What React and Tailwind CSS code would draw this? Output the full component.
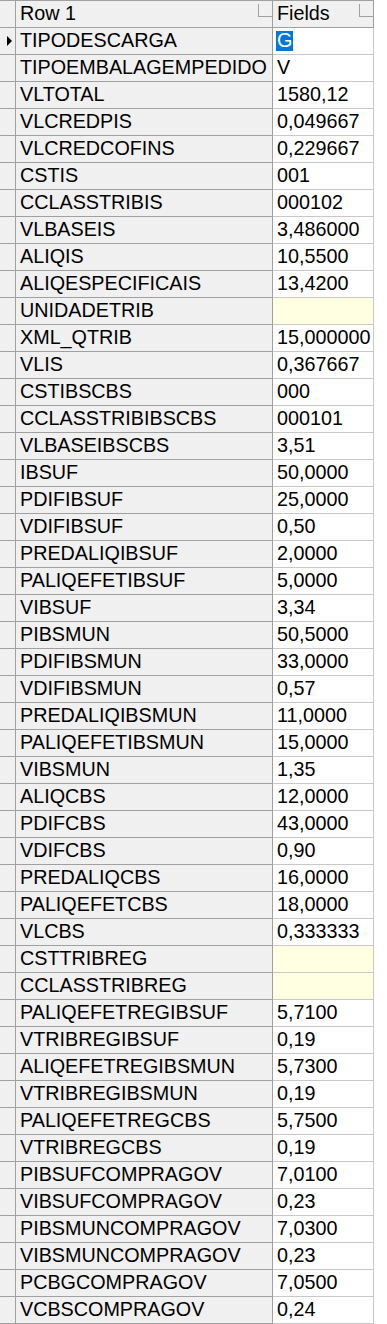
import React from 'react';

// ── Données de la grille ─────────────────────────────────────────────────────
const ROWS = [
  ["TIPODESCARGA", "G"],
  ["TIPOEMBALAGEMPEDIDO", "V"],
  ["VLTOTAL", "1580,12"],
  ["VLCREDPIS", "0,049667"],
  ["VLCREDCOFINS", "0,229667"],
  ["CSTIS", "001"],
  ["CCLASSTRIBIS", "000102"],
  ["VLBASEIS", "3,486000"],
  ["ALIQIS", "10,5500"],
  ["ALIQESPECIFICAIS", "13,4200"],
  ["UNIDADETRIB", null],
  ["XML_QTRIB", "15,000000"],
  ["VLIS", "0,367667"],
  ["CSTIBSCBS", "000"],
  ["CCLASSTRIBIBSCBS", "000101"],
  ["VLBASEIBSCBS", "3,51"],
  ["IBSUF", "50,0000"],
  ["PDIFIBSUF", "25,0000"],
  ["VDIFIBSUF", "0,50"],
  ["PREDALIQIBSUF", "2,0000"],
  ["PALIQEFETIBSUF", "5,0000"],
  ["VIBSUF", "3,34"],
  ["PIBSMUN", "50,5000"],
  ["PDIFIBSMUN", "33,0000"],
  ["VDIFIBSMUN", "0,57"],
  ["PREDALIQIBSMUN", "11,0000"],
  ["PALIQEFETIBSMUN", "15,0000"],
  ["VIBSMUN", "1,35"],
  ["ALIQCBS", "12,0000"],
  ["PDIFCBS", "43,0000"],
  ["VDIFCBS", "0,90"],
  ["PREDALIQCBS", "16,0000"],
  ["PALIQEFETCBS", "18,0000"],
  ["VLCBS", "0,333333"],
  ["CSTTRIBREG", null],
  ["CCLASSTRIBREG", null],
  ["PALIQEFETREGIBSUF", "5,7100"],
  ["VTRIBREGIBSUF", "0,19"],
  ["ALIQEFETREGIBSMUN", "5,7300"],
  ["VTRIBREGIBSMUN", "0,19"],
  ["PALIQEFETREGCBS", "5,7500"],
  ["VTRIBREGCBS", "0,19"],
  ["PIBSUFCOMPRAGOV", "7,0100"],
  ["VIBSUFCOMPRAGOV", "0,23"],
  ["PIBSMUNCOMPRAGOV", "7,0300"],
  ["VIBSMUNCOMPRAGOV", "0,23"],
  ["PCBGCOMPRAGOV", "7,0500"],
  ["VCBSCOMPRAGOV", "0,24"],
];

// petit bouton dans l'en-tête de colonne
const HeaderBtn = () => (
  <span className="absolute right-0 top-[3px] w-[14px] h-[13px] border-l border-b border-[#a0a0a0]" />
);

export default function App() {
  return (
    <div className="w-[387px] h-[1324px] bg-white overflow-hidden text-black text-[19.75px] font-['Liberation_Sans',Arial,sans-serif] leading-none">
      {/* ── En-tête ── */}
      <div className="flex h-[28px]">
        <div className="w-[16px] border-t border-r border-b border-[#a0a0a0] bg-[#f0f0f0]" />
        <div className="relative w-[257px] pl-[4px] flex items-center border-t border-r border-b border-[#a0a0a0] bg-[#f0f0f0]">
          Row 1
          <HeaderBtn />
        </div>
        <div className="relative w-[101px] pl-[4px] flex items-center border-t border-r border-b border-[#a0a0a0] bg-[#f0f0f0]">
          Fields
          <HeaderBtn />
        </div>
      </div>

      {/* ── Lignes ── */}
      {ROWS.map(([name, value], i) => (
        <div key={name} className="flex h-[27px]">
          <div className="w-[16px] flex items-center pl-[7px] border-r border-b border-[#a0a0a0] bg-[#f0f0f0]">
            {i === 0 && (
              <span className="block w-0 h-0 border-y-[5px] border-y-transparent border-l-[5px] border-l-black" />
            )}
          </div>
          <div className="w-[257px] pl-[4px] flex items-center border-r border-b border-[#a0a0a0] bg-[#f0f0f0] whitespace-nowrap">
            {name}
          </div>
          <div
            className={`w-[101px] pl-[3px] flex items-center border-r border-b border-[#c8c8c8] whitespace-nowrap ${
              value === null ? 'bg-[#ffffe1]' : 'bg-white'
            }`}
          >
            {i === 0 ? (
              <span className="bg-[#0078d7] text-white h-[20px] px-[1px] flex items-center">{value}</span>
            ) : (
              <span className="pl-[1px]">{value}</span>
            )}
          </div>
        </div>
      ))}
    </div>
  );
}
